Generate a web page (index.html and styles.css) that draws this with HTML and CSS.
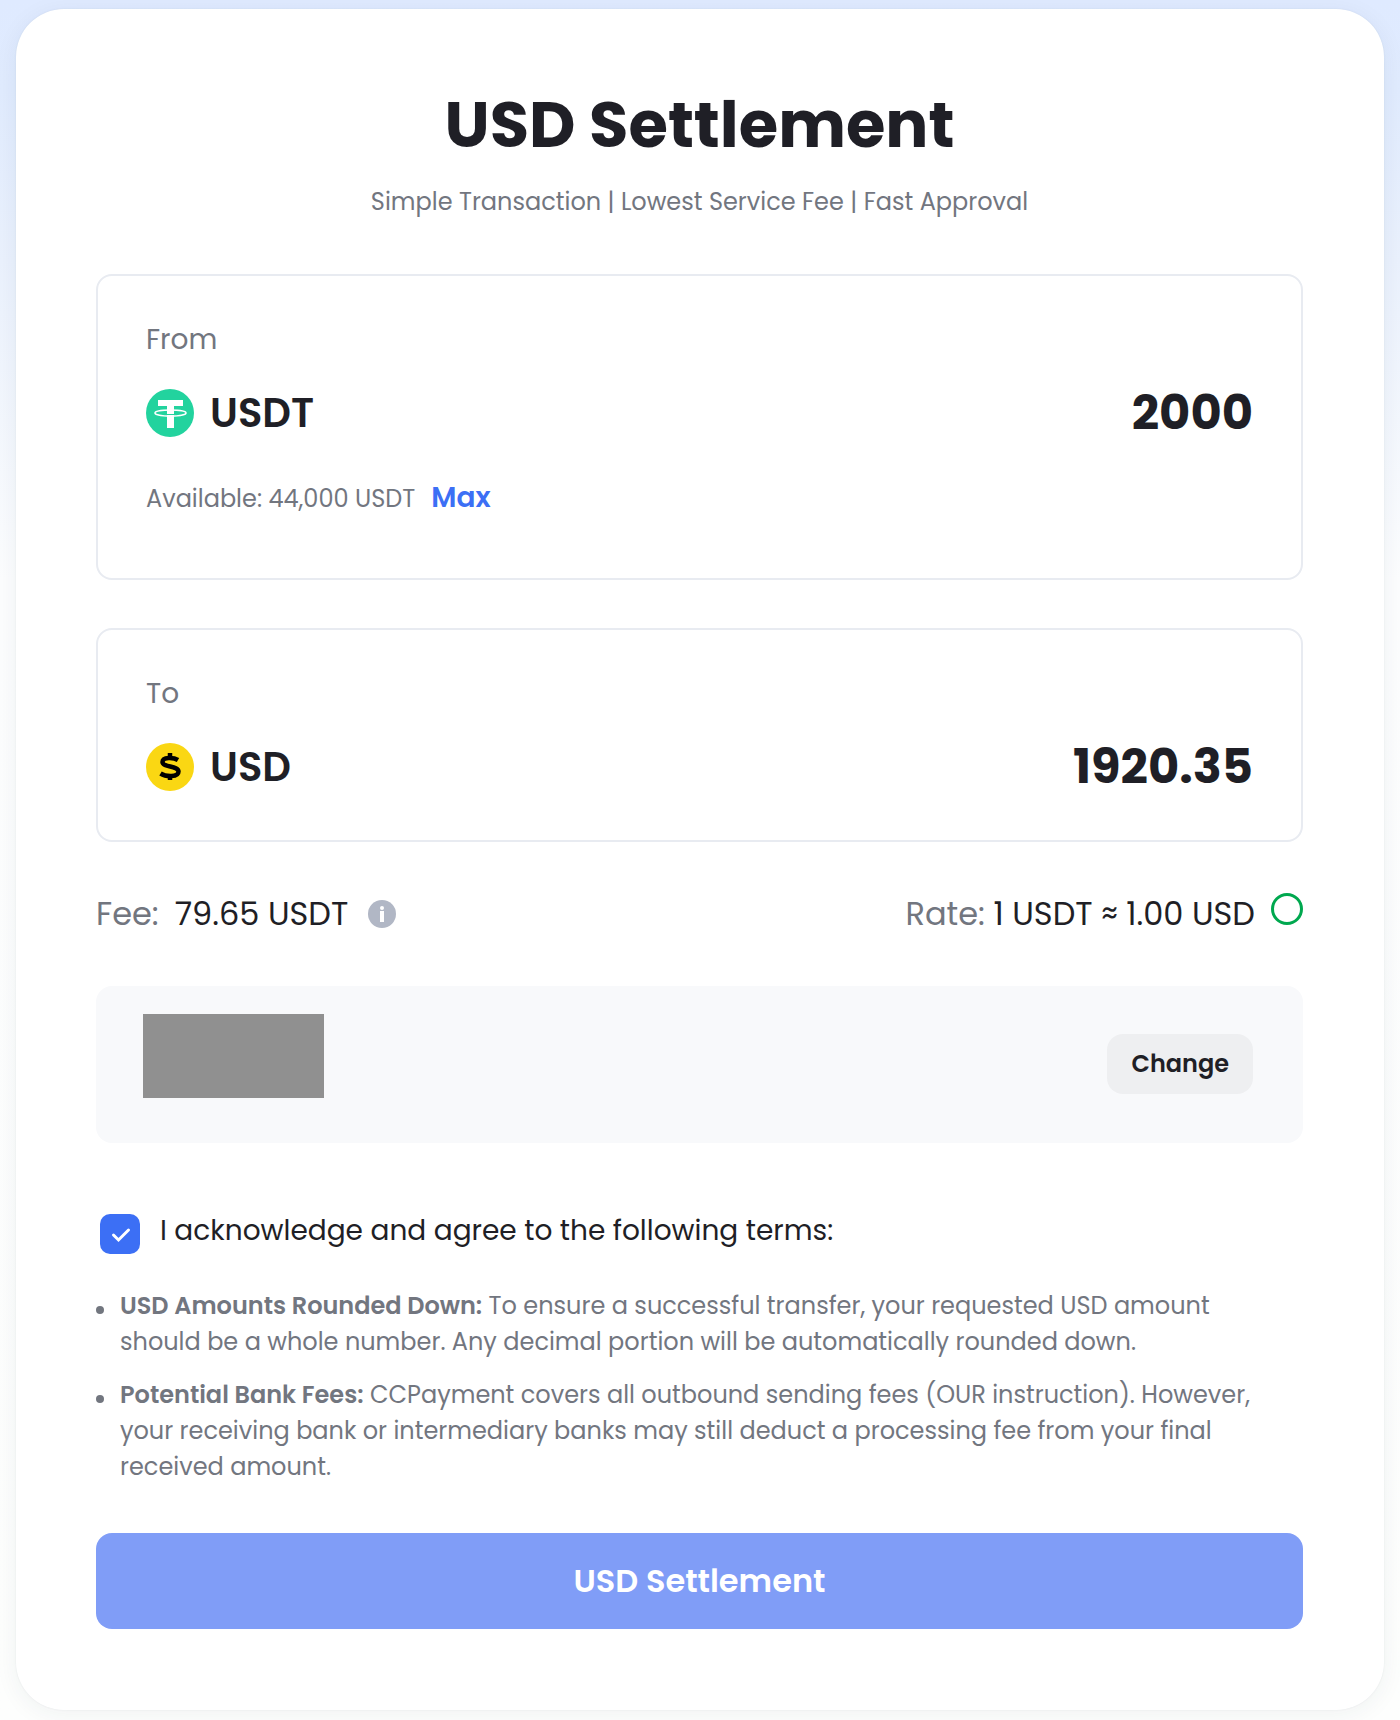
FILE: index.html
```
<!DOCTYPE html>
<html lang="en">

<head>
    <meta charset="UTF-8">
    <meta name="viewport" content="width=device-width, initial-scale=1.0">
    <title>USD Settlement</title>
    <link rel="stylesheet" href="styles.css">
</head>

<body>
    <form class="card">
        <h1>USD Settlement</h1>
        <p class="subtitle">Simple Transaction | Lowest Service Fee | Fast Approval</p>

        <div class="box">
            <label class="box-label" for="from">From</label>
            <div class="row">
                <svg class="coin" viewBox="0 0 48 48">
                    <circle cx="24" cy="24" r="24" fill="#22d39e" />
                    <path fill="#fff" d="M12 11h25v6h-9v22h-7V17h-9z" />
                    <ellipse cx="24.500" cy="24" rx="15.500" ry="3" fill="none" stroke="#fff" stroke-width="1.500" />
                    <path d="M21 25.500h7" stroke="#22d39e" stroke-width="1" />
                </svg>
                <span class="coin-name">USDT</span>
                <input class="amount" id="from" type="text" value="2000">
            </div>
            <div class="available">
                <span>Available: 44,000 USDT</span>
                <button type="button" class="max">Max</button>
            </div>
        </div>

        <div class="box">
            <label class="box-label" for="to">To</label>
            <div class="row">
                <svg class="coin" viewBox="0 0 48 48">
                    <circle cx="24" cy="24" r="24" fill="#fad713" />
                    <path d="M32 17C28 14.500 16.500 13.500 16.500 19S32.500 22.500 32.500 28.500 20 34 14.500 30.500" fill="none" stroke="#000" stroke-width="4.500" />
                    <path d="M24 10v5M24 32v5" stroke="#000" stroke-width="4.500" />
                </svg>
                <span class="coin-name">USD</span>
                <input class="amount" id="to" type="text" value="1920.35" readonly>
            </div>
        </div>

        <div class="info">
            <div class="fee">
                <span class="grey">Fee:</span>
                <span>79.65 USDT</span>
                <svg class="tip" viewBox="0 0 28 28">
                    <circle cx="14" cy="14" r="14" fill="#b1b7c5" />
                    <circle cx="14" cy="8" r="2" fill="#fff" />
                    <path d="M14 11v11" stroke="#fff" stroke-width="4" />
                </svg>
            </div>
            <div class="rate">
                <span><span class="grey">Rate:</span> 1 USDT ≈ 1.00 USD</span>
                <span class="circle"></span>
            </div>
        </div>

        <div class="account">
            <div class="account-name"></div>
            <button type="button" class="change">Change</button>
        </div>

        <div class="agree">
            <span class="check">
                <input type="checkbox" id="agree" checked>
                <svg viewBox="0 0 40 40">
                    <path d="M13.500 21l5 5L28.500 16" fill="none" stroke="#fff" stroke-width="3" stroke-linecap="round" />
                </svg>
            </span>
            <label for="agree">I acknowledge and agree to the following terms:</label>
        </div>

        <ul class="terms">
            <li><b>USD Amounts Rounded Down:</b> To ensure a successful transfer, your requested USD amount should be a whole number. Any decimal portion will be automatically rounded down.</li>
            <li><b>Potential Bank Fees:</b> CCPayment covers all outbound sending fees (OUR instruction). However, your receiving bank or intermediary banks may still deduct a processing fee from your final received amount.</li>
        </ul>

        <button type="submit" class="submit">USD Settlement</button>
    </form>
</body>

</html>
```

FILE: styles.css
```
* {
    margin: 0;
    padding: 0;
    box-sizing: border-box;
}

body {
    padding: 9px 16px 10px;
    background: linear-gradient(#dfeaff 0, #e0ebfe 90px, #eaf1fd 260px, #fcfdfe 580px, #fdfefd 100%) no-repeat;
    color: #1f1f26;
    font-family: Poppins, Inter, sans-serif;
}

button,
input {
    border: none;
    background: none;
    color: inherit;
    font-family: inherit;
}

.card {
    padding: 76px 81px 81px 80px;
    border-radius: 48px;
    background: #fff;
    box-shadow: 0 0 2px rgba(30, 50, 70, 0.08), 0 4px 24px rgba(30, 50, 70, 0.06);
}

h1 {
    line-height: 80px;
    font-size: 64px;
    text-align: center;
}

.subtitle {
    margin: 19px 0 54px;
    line-height: 36px;
    font-size: 24px;
    color: #72767f;
    text-align: center;
}

.box {
    margin-bottom: 48px;
    padding: 40px 48px;
    border: 2px solid #e8ebf1;
    border-radius: 16px;
}

.box-label {
    display: block;
    margin-bottom: 16px;
    line-height: 48px;
    font-size: 28px;
    color: #72767f;
}

.row {
    display: flex;
    align-items: center;
    height: 66px;
}

.coin {
    width: 48px;
    height: 48px;
}

.coin-name {
    margin-left: 16px;
    font-size: 40px;
    font-weight: 600;
}

.amount {
    flex: 1;
    min-width: 0;
    font-size: 48px;
    font-weight: 700;
    text-align: right;
    outline: none;
}

.available {
    display: flex;
    align-items: center;
    gap: 16px;
    height: 48px;
    margin: 28px 0 16px;
    font-size: 24px;
    color: #72767f;
}

.max {
    color: #3c6ff5;
    font-size: 28px;
    font-weight: 600;
}

.info {
    display: flex;
    justify-content: space-between;
    line-height: 48px;
    font-size: 32px;
}

.grey {
    color: #72767f;
}

.fee,
.rate {
    display: flex;
    align-items: center;
    gap: 16px;
}

.tip {
    width: 28px;
    height: 28px;
    margin-left: 4px;
}

.circle {
    align-self: flex-start;
    width: 32px;
    height: 32px;
    margin-top: 3px;
    border: 3px solid #00a84f;
    border-radius: 50%;
}

.account {
    display: flex;
    justify-content: space-between;
    align-items: flex-start;
    margin: 48px 0 64px;
    padding: 28px 50px 45px 47px;
    border-radius: 16px;
    background: #f8f9fb;
}

.account-name {
    width: 181px;
    height: 84px;
    background: #909090;
}

.change {
    align-self: center;
    padding: 0 24px;
    margin-top: 16px;
    border-radius: 16px;
    background: #eeeff1;
    line-height: 60px;
    font-size: 24px;
    font-weight: 600;
}

.agree {
    display: flex;
    align-items: center;
    gap: 20px;
    padding-left: 4px;
    line-height: 48px;
    font-size: 28px;
}

.check {
    display: grid;
    margin-top: 6px;
}

.check input,
.check svg {
    grid-area: 1 / 1;
    width: 40px;
    height: 40px;
}

.check input {
    appearance: none;
    border-radius: 10px;
    background: #3c6ff5;
}

.check svg {
    pointer-events: none;
}

.check input:not(:checked) + svg {
    display: none;
}

.terms {
    margin: 33px 0 48px;
    padding-right: 24px;
    list-style: none;
    line-height: 36px;
    font-size: 24px;
    color: #72767f;
}

.terms li {
    position: relative;
    padding-left: 24px;
}

.terms li + li {
    margin-top: 17px;
}

.terms li::before {
    content: "";
    position: absolute;
    left: 0;
    top: 18px;
    width: 8px;
    height: 8px;
    border-radius: 50%;
    background: #72767f;
}

.terms b {
    font-weight: 600;
}

.submit {
    width: 100%;
    border-radius: 16px;
    background: #809df7;
    color: #fff;
    line-height: 96px;
    font-size: 32px;
    font-weight: 600;
}
```
